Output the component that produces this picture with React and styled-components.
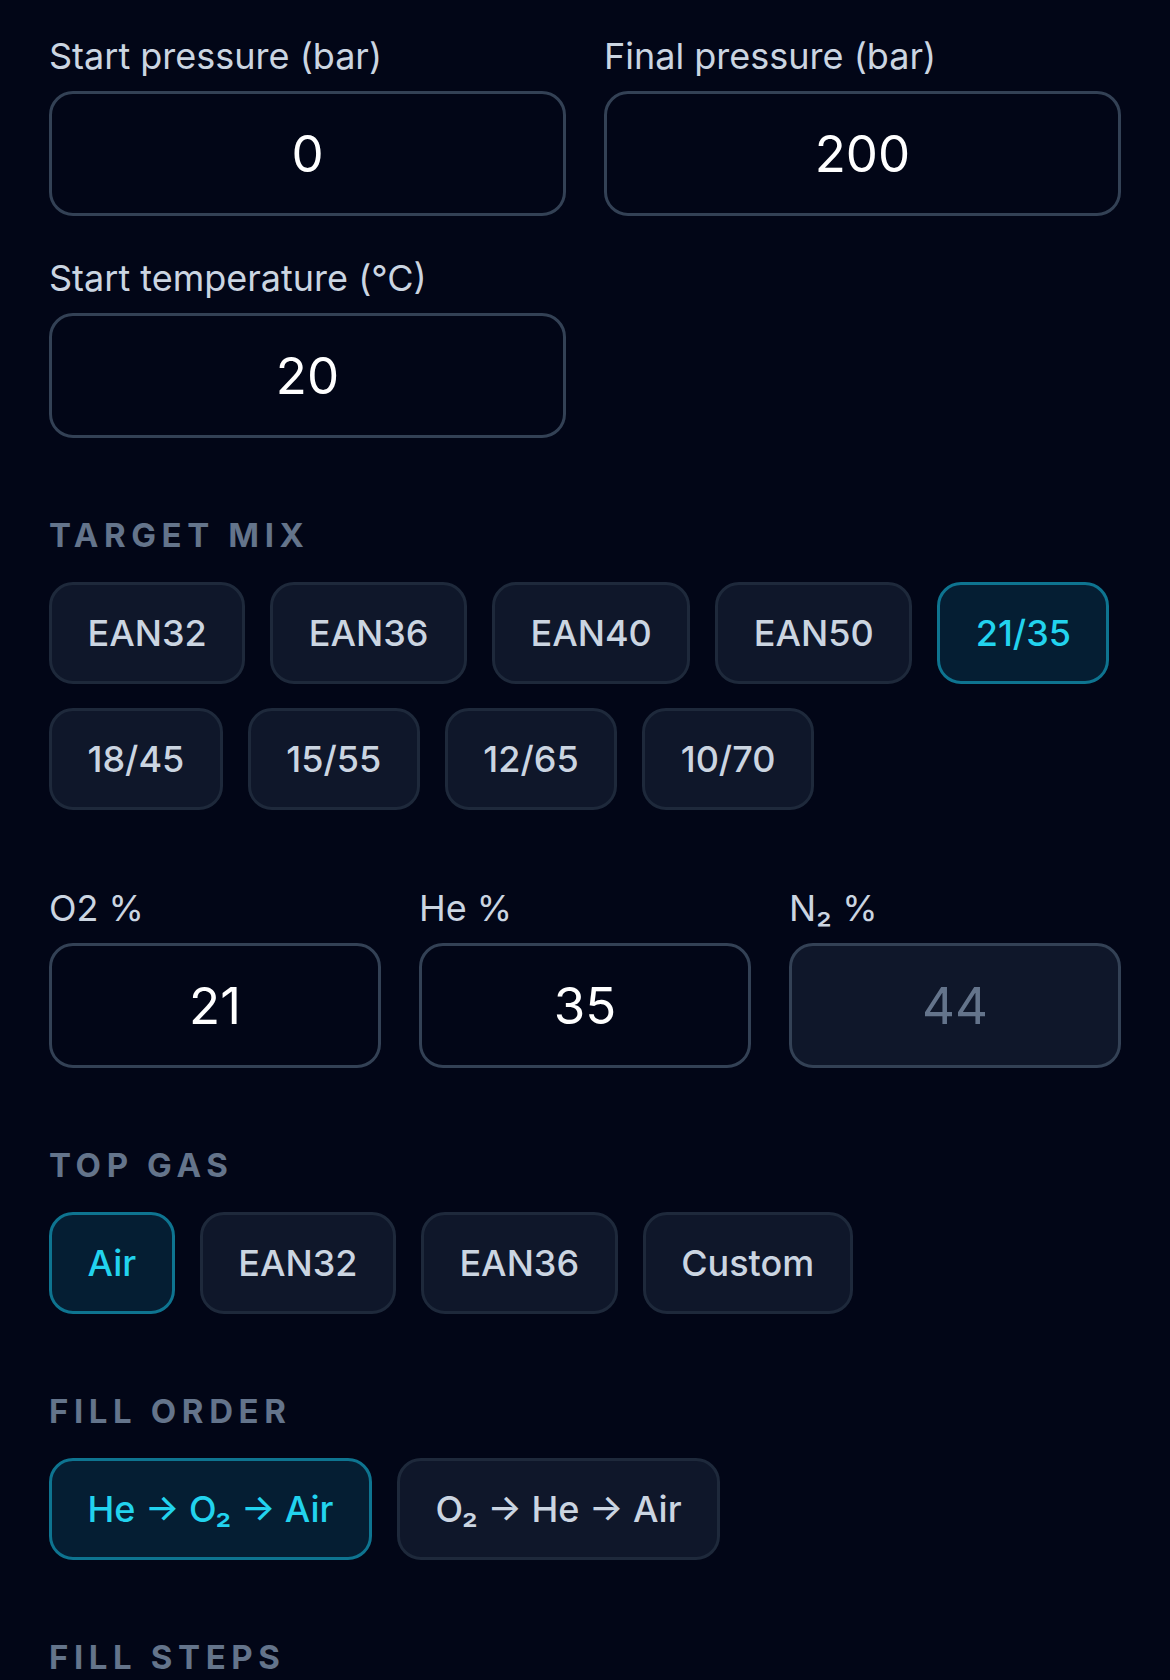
import React from "react";
import styled, { createGlobalStyle } from "styled-components";

const GlobalStyle = createGlobalStyle`
  html, body {
    margin: 0;
    padding: 0;
    background: #020617;
  }
  body {
    font-family: Inter, "Noto Sans", "Liberation Sans", sans-serif;
    -webkit-font-smoothing: antialiased;
  }
  * {
    box-sizing: border-box;
  }
`;

const targetMixes = ["EAN32", "EAN36", "EAN40", "EAN50", "21/35", "18/45", "15/55", "12/65", "10/70"];
const topGases = ["Air", "EAN32", "EAN36", "Custom"];
const fillOrders = ["He → O₂ → Air", "O₂ → He → Air"];

const App = () => {
  return (
    <Page>
      <GlobalStyle />
      <FieldGrid columns={2}>
        <Field>
          <Label>Start pressure (bar)</Label>
          <ValueBox>0</ValueBox>
        </Field>
        <Field>
          <Label>Final pressure (bar)</Label>
          <ValueBox>200</ValueBox>
        </Field>
        <Field>
          <Label>Start temperature (°C)</Label>
          <ValueBox>20</ValueBox>
        </Field>
      </FieldGrid>

      <Section>
        <SectionTitle>Target mix</SectionTitle>
        <ChipRow>
          {targetMixes.map((mix) => (
            <Chip key={mix} active={mix === "21/35"}>
              {mix}
            </Chip>
          ))}
        </ChipRow>
      </Section>

      <Section space={75}>
        <FieldGrid columns={3}>
          <Field>
            <Label>O2 %</Label>
            <ValueBox>21</ValueBox>
          </Field>
          <Field>
            <Label>He %</Label>
            <ValueBox>35</ValueBox>
          </Field>
          <Field>
            <Label>N₂ %</Label>
            <ValueBox disabled>44</ValueBox>
          </Field>
        </FieldGrid>
      </Section>

      <Section>
        <SectionTitle>Top gas</SectionTitle>
        <ChipRow>
          {topGases.map((gas) => (
            <Chip key={gas} active={gas === "Air"}>
              {gas}
            </Chip>
          ))}
        </ChipRow>
      </Section>

      <Section>
        <SectionTitle>Fill order</SectionTitle>
        <ChipRow>
          {fillOrders.map((order, i) => (
            <Chip key={order} active={i === 0}>
              {order}
            </Chip>
          ))}
        </ChipRow>
      </Section>

      <Section>
        <SectionTitle>Fill steps</SectionTitle>
      </Section>
    </Page>
  );
};

export default App;

const Page = styled.div`
  width: 1170px;
  height: 1680px;
  background: #020617;
  padding: 33px 49px 0;
  overflow: hidden;
`;

const FieldGrid = styled.div`
  display: grid;
  grid-template-columns: repeat(${(p) => p.columns}, 1fr);
  column-gap: 38px;
  row-gap: 39px;
`;

const Field = styled.div`
  display: flex;
  flex-direction: column;
  gap: 12px;
`;

const Label = styled.div`
  font-size: 36px;
  line-height: 46px;
  color: #cbd5e1;
  font-weight: 400;
`;

const ValueBox = styled.div`
  height: 125px;
  border: 3px solid #334155;
  border-radius: 24px;
  background: ${(p) => (p.disabled ? "#0f172a" : "#020617")};
  color: ${(p) => (p.disabled ? "#64748b" : "#ffffff")};
  font-size: 51px;
  display: flex;
  align-items: center;
  justify-content: center;
`;

const Section = styled.div`
  margin-top: ${(p) => p.space || 77}px;
`;

const SectionTitle = styled.div`
  font-size: 33px;
  line-height: 40px;
  font-weight: 700;
  letter-spacing: 0.17em;
  text-transform: uppercase;
  color: #64748b;
  margin-bottom: 27px;
`;

const ChipRow = styled.div`
  display: flex;
  flex-wrap: wrap;
  gap: 24px 25px;
`;

const Chip = styled.button`
  height: 102px;
  padding: 0 35.5px;
  border-radius: 24px;
  border: 3px solid ${(p) => (p.active ? "#0e7490" : "#1e293b")};
  background: ${(p) => (p.active ? "#051e33" : "#0f172a")};
  color: ${(p) => (p.active ? "#22d3ee" : "#cbd5e1")};
  font-family: inherit;
  font-size: 36px;
  font-weight: 500;
  cursor: pointer;
`;
